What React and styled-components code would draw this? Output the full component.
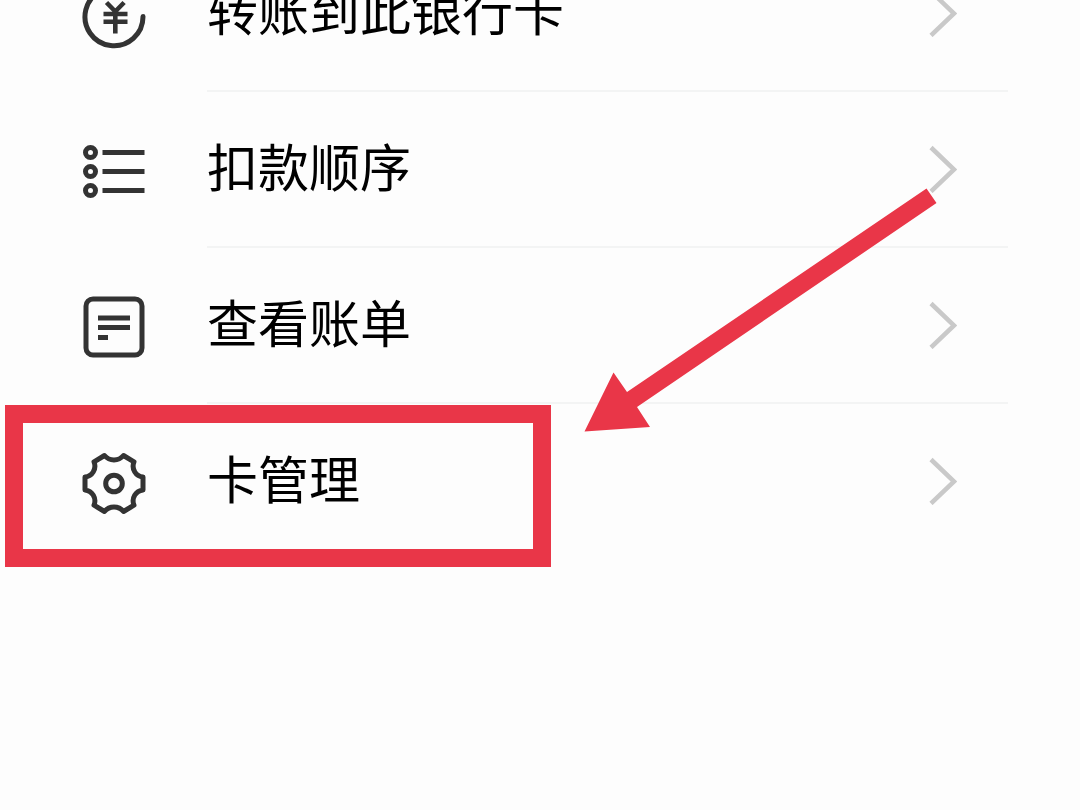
import React from "react";
import styled, { createGlobalStyle, css } from "styled-components";

const GlobalStyle = createGlobalStyle`
  body {
    margin: 0;
    background: #fdfdfd;
    color: #000;
    font-family: "Noto Sans CJK SC", "Noto Sans", sans-serif;
  }
`;

const Page = styled.main`
  min-height: 100vh;
  overflow: hidden;
`;

/* The list is scrolled so that its first row is partly out of view. */
const Menu = styled.ul`
  position: relative;
  margin: -64px 0 0;
  padding: 0;
  list-style: none;
`;

const Item = styled.li`
  position: relative;
`;

const RowLink = styled.a`
  display: flex;
  align-items: center;
  gap: 61px;
  padding: 0 72px 0 82px;
  color: inherit;
  text-decoration: none;
`;

const RowIcon = styled.svg`
  flex: none;
  width: 64px;
  height: 64px;
  overflow: visible;
  fill: none;
  stroke: #333;
  stroke-width: 5;
  stroke-linejoin: round;
`;

const RowBody = styled.span`
  flex: 1;
  display: flex;
  align-items: center;
  justify-content: space-between;
  box-sizing: border-box;
  height: 156px;
  padding: 0 51px 2px 0;
  ${(p) =>
    p.$divided &&
    css`
      background: linear-gradient(#f3f4f4, #f3f4f4) bottom / 100% 2px no-repeat;
    `}
`;

const Label = styled.span`
  padding-bottom: 8px;
  font-size: 51px;
  line-height: 76px;
  white-space: nowrap;
`;

const Chevron = styled.svg`
  flex: none;
  width: 28px;
  height: 48px;
  fill: none;
  stroke: #c9c9c9;
  stroke-width: 4.5;
`;

const Highlight = styled.span`
  position: absolute;
  top: 1px;
  left: 5px;
  box-sizing: border-box;
  width: 546px;
  height: 162px;
  border: 18px solid #e93648;
  pointer-events: none;
`;

const Pointer = styled.svg`
  position: absolute;
  top: 252px;
  left: 584px;
  width: 353px;
  height: 245px;
  fill: #e93648;
  pointer-events: none;
`;

const icons = {
  transfer: (
    <>
      <path d="M61 34.5A29 29 0 1 1 42.5 7.7" strokeLinecap="round" />
      <path d="M24.5 20.5l8.8 9 8.8-9M33.3 28v23.5M21.5 32h24M21.5 39.7h24" strokeWidth="4.6" />
    </>
  ),
  order: (
    <>
      <circle cx="8.5" cy="14.5" r="5" />
      <circle cx="8.5" cy="33.5" r="5" />
      <circle cx="8.5" cy="52.5" r="5" />
      <path d="M20.5 14.5h42M20.5 33.5h42M20.5 52.5h42" />
    </>
  ),
  bill: (
    <>
      <rect x="4" y="5" width="56" height="56" rx="7" />
      <path d="M16 24h32M16 33.5h32M16 43.5h10" />
    </>
  ),
  manage: (
    <>
      <path d="M22.5 5.5A12.5 12.5 0 0 0 41.5 5.5L52 11.8A11 11 0 0 0 61 27V40A11 11 0 0 0 52 55.2L41.5 61.5A12.5 12.5 0 0 0 22.5 61.5L12 55.2A11 11 0 0 0 3 40V27A11 11 0 0 0 12 11.8Z" />
      <circle cx="32" cy="33.5" r="8.3" />
    </>
  ),
};

const rows = [
  { id: "transfer", label: "转账到此银行卡" },
  { id: "order", label: "扣款顺序" },
  { id: "bill", label: "查看账单" },
  { id: "manage", label: "卡管理", highlighted: true },
];

export default function App() {
  return (
    <Page>
      <GlobalStyle />
      <Menu>
        {rows.map((row, i) => (
          <Item key={row.id}>
            <RowLink href={`#${row.id}`}>
              <RowIcon viewBox="0 0 64 64" aria-hidden="true">
                {icons[row.id]}
              </RowIcon>
              <RowBody $divided={i < rows.length - 1}>
                <Label>{row.label}</Label>
                <Chevron viewBox="0 0 28 48" aria-hidden="true">
                  <path d="M2 2.5L25 24.5L2 46.5" />
                </Chevron>
              </RowBody>
            </RowLink>
            {row.highlighted && <Highlight />}
          </Item>
        ))}
        <Pointer viewBox="0 0 353 245" aria-hidden="true">
          <path d="M.5 243.5L29.5 184.5L43 204L342.5 .5L352.5 15L53 219L66 239Z" />
        </Pointer>
      </Menu>
    </Page>
  );
}
